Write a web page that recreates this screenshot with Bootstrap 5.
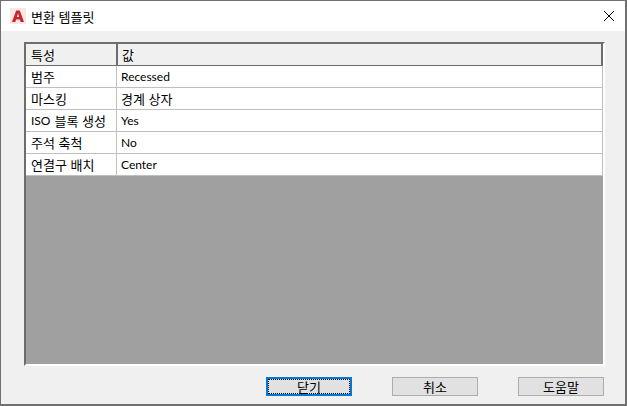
<!DOCTYPE html>
<html lang="ko"><head><meta charset="utf-8">
<link href="https://cdn.jsdelivr.net/npm/bootstrap@5.3.0/dist/css/bootstrap.min.css" rel="stylesheet">
<style>
html,body{margin:0;height:406px;overflow:hidden;background:#f0f0f0}
body{font-family:"Noto Sans CJK KR",sans-serif;font-size:13px;color:#000;line-height:1}
.lat{font-family:Lato,"Liberation Sans",sans-serif;font-size:12px}
.dlg{width:627px;height:406px;border:1px solid #707070;border-bottom-width:2px;border-right-width:2px;background:#f0f0f0}
.ttl{height:30px;background:#fff;padding-left:9px}
.ttl-text{margin-left:5px}
.cls{width:12px;height:12px;margin-right:10px}
.grid-box{margin:11px 20px 0 23px;height:324px;border:2px solid #6d6d6d;border-right-color:#fff;border-bottom-color:#fff;background:#a0a0a0}
.grow{height:22px;background:#fff;border-bottom:1px solid #bfbfbf;border-right:1px solid #bfbfbf}
.ghead{background:#f0f0f0;border-bottom-color:#6d6d6d;border-right:2px solid #6d6d6d}
.c1{width:91px;border-right:1px solid #bfbfbf;padding-left:5px}
.ghead .c1{border-right:2px solid #6d6d6d;width:92px}
.c2{padding-left:4px}
.btns{padding-top:11px;gap:40px;padding-right:21px}
.wbtn{width:86px;height:19px;background:#e1e1e1;border:1px solid #adadad;font-size:13px;line-height:1;padding:0;color:#000;border-radius:0}
.wbtn-def{border:2px solid #0078d7;outline:1px dotted #000;outline-offset:-3px}
</style></head><body>
<div class="dlg d-flex flex-column">
 <div class="ttl d-flex align-items-center">
  <svg width="16" height="16" viewBox="0 0 16 16"><rect width="16" height="16" fill="#fbe6e2"/><path d="M2 14 6.2 2.5h3.6L14 14h-3.4l-.7-2.4H6l-.7 2.4zM6.9 9h2.2L8 5.2z" fill="#c4252f" fill-rule="evenodd"/></svg>
  <span class="ttl-text flex-grow-1">변환 템플릿</span>
  <svg class="cls" viewBox="0 0 12 12"><path d="M1 1 11 11M11 1 1 11" stroke="#000" stroke-width="1" fill="none"/></svg>
 </div>
 <div class="grid-box">
  <div class="grow ghead d-flex"><div class="c1 d-flex align-items-center">특성</div><div class="c2 d-flex align-items-center">값</div></div>
  <div class="grow d-flex"><div class="c1 d-flex align-items-center">범주</div><div class="c2 d-flex align-items-center lat">Recessed</div></div>
  <div class="grow d-flex"><div class="c1 d-flex align-items-center">마스킹</div><div class="c2 d-flex align-items-center">경계 상자</div></div>
  <div class="grow d-flex"><div class="c1 d-flex align-items-center gap-1"><span class="lat">ISO</span><span>블록 생성</span></div><div class="c2 d-flex align-items-center lat">Yes</div></div>
  <div class="grow d-flex"><div class="c1 d-flex align-items-center">주석 축척</div><div class="c2 d-flex align-items-center lat">No</div></div>
  <div class="grow d-flex"><div class="c1 d-flex align-items-center">연결구 배치</div><div class="c2 d-flex align-items-center lat">Center</div></div>
 </div>
 <div class="btns d-flex justify-content-end">
  <button type="button" class="btn wbtn wbtn-def">닫기</button>
  <button type="button" class="btn wbtn">취소</button>
  <button type="button" class="btn wbtn">도움말</button>
 </div>
</div>
</body></html>
